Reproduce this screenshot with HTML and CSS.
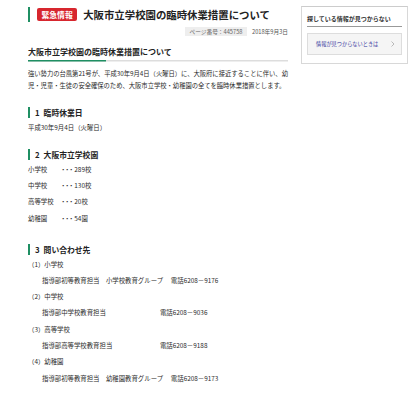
FILE: index.html
```html
<!DOCTYPE html>
<html lang="ja">
<head>
<meta charset="utf-8">
<title>大阪市立学校園の臨時休業措置について</title>
<link rel="stylesheet" href="styles.css">
</head>
<body>
<div class="page">
  <main class="main">
    <div class="title-row">
      <span class="badge">緊急情報</span>
      <h1>大阪市立学校園の臨時休業措置について</h1>
    </div>
    <div class="meta">
      <span class="pageno">ページ番号：445758</span>
      <span class="date">2018年9月3日</span>
    </div>
    <h2>大阪市立学校園の臨時休業措置について</h2>
    <p class="lead">強い勢力の台風第21号が、平成30年9月4日（火曜日）に、大阪府に接近することに伴い、幼児・児童・生徒の安全確保のため、大阪市立学校・幼稚園の全てを臨時休業措置とします。</p>

    <h3 class="sec sec-1"><span class="num">1</span>臨時休業日</h3>
    <p class="line first">平成30年9月4日（火曜日）</p>

    <h3 class="sec sec-2"><span class="num">2</span>大阪市立学校園</h3>
    <p class="line first">小学校　　<span class="dots">・・・</span>289校</p>
    <p class="line">中学校　　<span class="dots">・・・</span>130校</p>
    <p class="line">高等学校　<span class="dots">・・・</span>20校</p>
    <p class="line">幼稚園　　<span class="dots">・・・</span>54園</p>

    <h3 class="sec sec-3"><span class="num">3</span>問い合わせ先</h3>
    <p class="line first">（1）小学校</p>
    <p class="line contact">指導部初等教育担当　小学校教育グループ　 電話6208－9176</p>
    <p class="line">（2）中学校</p>
    <p class="line contact">指導部中学校教育担当　　　　　　　　  電話6208－9036</p>
    <p class="line">（3）高等学校</p>
    <p class="line contact">指導部高等学校教育担当　　　　　　　  電話6208－9188</p>
    <p class="line">（4）幼稚園</p>
    <p class="line contact">指導部初等教育担当　幼稚園教育グループ　 電話6208－9173</p>
  </main>

  <aside class="side">
    <h4 class="side-title">探している情報が見つからない</h4>
    <a class="side-btn" href="#">
      <span>情報が見つからないときは</span>
      <svg class="chev" width="4" height="6" viewBox="0 0 4 6"><path d="M0.5 0.5 L3 3 L0.5 5.5" fill="none" stroke="#aaa" stroke-width="0.8"/></svg>
    </a>
  </aside>
</div>
</body>
</html>
```
FILE: styles.css
```css
* { box-sizing: border-box; margin: 0; padding: 0; }

body {
  font-family: "Noto Sans CJK JP", sans-serif;
  color: #2a2a2a;
  background: #fff;
}

.page {
  display: flex;
  align-items: flex-start;
  gap: 13px;
  padding: 6px 0 0 28px;
}

.main { width: 260px; }

.title-row {
  display: flex;
  align-items: center;
  gap: 6px;
  height: 15px;
  margin-top: 1px;
  padding-left: 7px;
  border-left: 2.5px solid #1f8f63;
}

.badge {
  display: inline-block;
  height: 13px;
  padding: 0 4.5px;
  border-radius: 2px;
  background: #d7262e;
  color: #fff;
  font-size: 7.8px;
  font-weight: 700;
  line-height: 13px;
}

h1 {
  font-size: 10.4px;
  font-weight: 700;
  line-height: 15px;
  color: #222;
}

.meta {
  display: flex;
  justify-content: flex-end;
  align-items: center;
  gap: 5px;
  margin-top: 5px;
  height: 9px;
}

.pageno {
  background: #eee;
  padding: 0 4.5px;
  font-size: 5.7px;
  line-height: 9px;
  color: #666;
}

.date {
  font-size: 5.7px;
  line-height: 9px;
  color: #555;
}

h2 {
  margin-top: 11px;
  padding-bottom: 4.5px;
  font-size: 8px;
  font-weight: 700;
  line-height: 10px;
  color: #222;
  background:
    linear-gradient(#1f8f63, #1f8f63) left bottom / 78px 1.5px no-repeat,
    linear-gradient(#ddd, #ddd) left bottom / 100% 1.5px no-repeat;
}

.lead {
  margin-top: 6.5px;
  font-size: 6.3px;
  line-height: 12px;
}

.sec {
  border-left: 2px solid #1f8f63;
  padding-left: 5px;
  font-size: 7.8px;
  font-weight: 700;
  line-height: 11px;
  color: #222;
}

.sec-1 { margin-top: 15px; }
.sec-2 { margin-top: 16.7px; }
.sec-3 { margin-top: 21px; }

.num { margin-right: 4px; }

.line {
  font-size: 6.4px;
  line-height: 8px;
  margin-top: 8.3px;
  white-space: pre;
}

.line.first { margin-top: 6px; }

.dots { letter-spacing: -2.4px; margin-right: 2.4px; }

.contact { padding-left: 14px; }

.side {
  width: 107px;
  border: 1px solid #d8d8d8;
  border-top: 1.5px solid #ccc;
  padding: 8px 5px 8px;
}

.side-title {
  font-size: 6px;
  font-weight: 700;
  line-height: 8px;
  color: #333;
  padding-bottom: 3px;
  border-bottom: 1px solid #999;
}

.side-btn {
  display: flex;
  align-items: center;
  justify-content: space-between;
  height: 22px;
  margin-top: 5.5px;
  padding: 0 6px 0 8px;
  background: #f5f5f5;
  border: 1px solid #ddd;
  text-decoration: none;
  color: #3a3aa0;
  font-size: 5.2px;
  line-height: 8px;
}

.chev { display: block; }
```
